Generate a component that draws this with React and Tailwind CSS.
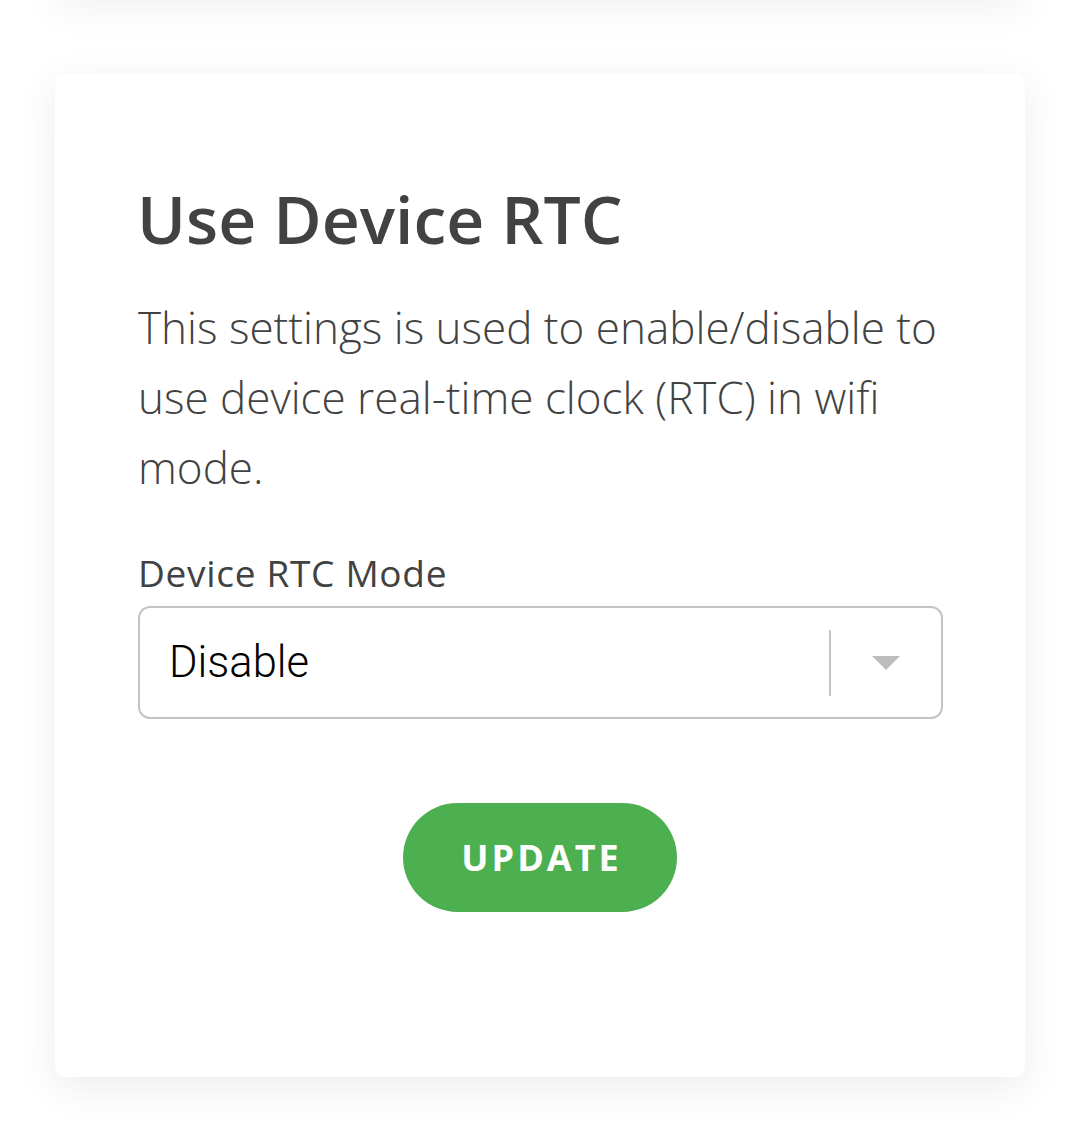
export default function App() {
  return (
    <div className="min-h-[1147px] w-[1080px] bg-white overflow-hidden" style={{ fontFamily: '"Open Sans", sans-serif' }}>
      <div className="flex flex-col items-center gap-[76px] pb-[70px]">
        <div className="w-[970px] h-[100px] mt-[-102px] rounded-[12px] bg-white shadow-[0_10px_40px_rgba(0,0,0,0.06)]" />
        <div className="w-[970px] h-[1003px] rounded-[12px] bg-white shadow-[0_10px_40px_rgba(0,0,0,0.08)] px-[83px] pt-[104px]">
          <h1 className="text-[66px] leading-[80px] font-semibold text-[#424242] -ml-[1px]">Use Device RTC</h1>
          <p className="mt-[34px] text-[44px] leading-[70px] font-light text-[#424242]">
            This settings is used to enable/disable to use device real-time clock (RTC) in wifi mode.
          </p>
          <label className="block mt-[47px] text-[37px] leading-[48px] tracking-[0.7px] text-[#424242]">Device RTC Mode</label>
          <div className="mt-[9px] h-[113px] w-[805px] rounded-[12px] border-2 border-[#c4c4c4] flex items-center">
            <span className="flex-1 pl-[29px] text-[43.5px] font-light text-black" style={{ fontFamily: 'Roboto, sans-serif' }}>Disable</span>
            <div className="w-[2px] h-[66px] bg-[#c4c4c4]" />
            <div className="w-[110px] flex justify-center">
              <svg width="28" height="14" viewBox="0 0 28 14"><path d="M0 0 L28 0 L14 14 Z" fill="#bdbdbd" /></svg>
            </div>
          </div>
          <div className="flex justify-center mt-[84px]">
            <button className="w-[274px] h-[109px] rounded-full bg-[#4caf50] text-white text-[36px] font-bold tracking-[3px] pl-[3px]">UPDATE</button>
          </div>
        </div>
      </div>
    </div>
  );
}
